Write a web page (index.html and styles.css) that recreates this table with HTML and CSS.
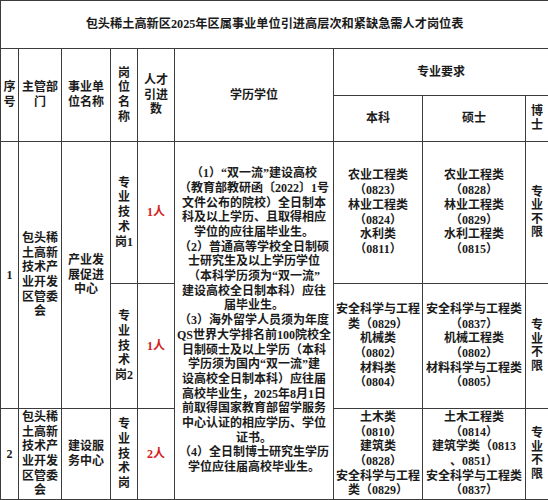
FILE: index.html
```html
<!DOCTYPE html>
<html lang="zh-CN">
<head>
<meta charset="utf-8">
<title>岗位表</title>
<link rel="stylesheet" href="styles.css">
</head>
<body>
<table class="sheet">
  <colgroup>
    <col class="c-no"><col class="c-dept"><col class="c-unit"><col class="c-post"><col class="c-num"><col class="c-edu"><col class="c-bk"><col class="c-ss"><col class="c-bs">
  </colgroup>
  <tr class="r-title">
    <td colspan="9" class="title">包头稀土高新区2025年区属事业单位引进高层次和紧缺急需人才岗位表</td>
  </tr>
  <tr class="r-ha">
    <td rowspan="2">序<br>号</td>
    <td rowspan="2">主管部<br>门</td>
    <td rowspan="2">事业单<br>位名称</td>
    <td rowspan="2">岗<br>位<br>名<br>称</td>
    <td rowspan="2">人才<br>引进<br>数</td>
    <td rowspan="2">学历学位</td>
    <td colspan="3">专业要求</td>
  </tr>
  <tr class="r-hb">
    <td>本科</td>
    <td>硕士</td>
    <td class="narrow">博<br>士</td>
  </tr>
  <tr class="r-1a">
    <td rowspan="2">1</td>
    <td rowspan="2">包头稀<br>土高新<br>技术产<br>业开发<br>区管委<br>会</td>
    <td rowspan="2">产业发<br>展促进<br>中心</td>
    <td>专<br>业<br>技<br>术<br>岗1</td>
    <td class="red">1人</td>
    <td rowspan="3" class="edu">（1）“双一流”建设高校<br>（教育部教研函〔2022〕1号<br>文件公布的院校）全日制本<br>科及以上学历、且取得相应<br>学位的应往届毕业生。<br>（2）普通高等学校全日制硕<br>士研究生及以上学历学位<br>（本科学历须为“双一流”<br>建设高校全日制本科）应往<br>届毕业生。<br>（3）海外留学人员须为年度<br>QS世界大学排名前100院校全<br>日制硕士及以上学历（本科<br>学历须为国内“双一流”建<br>设高校全日制本科）应往届<br>高校毕业生，2025年8月1日<br>前取得国家教育部留学服务<br>中心认证的相应学历、学位<br>证书。<br>（4）全日制博士研究生学历<br>学位应往届高校毕业生。</td>
    <td>农业工程类<br>（0823）<br>林业工程类<br>（0824）<br>水利类<br>（0811）</td>
    <td>农业工程类<br>（0828）<br>林业工程类<br>（0829）<br>水利工程类<br>（0815）</td>
    <td class="narrow">专<br>业<br>不<br>限</td>
  </tr>
  <tr class="r-1b">
    <td>专<br>业<br>技<br>术<br>岗2</td>
    <td class="red">1人</td>
    <td>安全科学与工程<br>类（0829）<br>机械类<br>（0802）<br>材料类<br>（0804）</td>
    <td>安全科学与工程类<br>（0837）<br>机械工程类<br>（0802）<br>材料科学与工程类<br>（0805）</td>
    <td class="narrow">专<br>业<br>不<br>限</td>
  </tr>
  <tr class="r-2">
    <td>2</td>
    <td>包头稀<br>土高新<br>技术产<br>业开发<br>区管委<br>会</td>
    <td>建设服<br>务中心</td>
    <td>专<br>业<br>技<br>术<br>岗</td>
    <td class="red">2人</td>
    <td>土木类<br>（0810）<br>建筑类<br>（0828）<br>安全科学与工程<br>类（0829）</td>
    <td>土木工程类<br>（0814）<br>建筑学类（0813<br>、0851）<br>安全科学与工程类<br>（0837）</td>
    <td class="narrow">专<br>业<br>不<br>限</td>
  </tr>
</table>
</body>
</html>
```
FILE: styles.css
```css
html, body {
  margin: 0;
  padding: 0;
  background: #ffffff;
}

.sheet {
  border-collapse: collapse;
  table-layout: fixed;
  width: 548px;
  font-family: "Liberation Serif", "Noto Sans CJK SC", serif;
  font-weight: 700;
  font-size: 12px;
  line-height: 14.7px;
  color: #1b1b1b;
}

.sheet td {
  border: 1px solid #3c3c3c;
  padding: 0;
  text-align: center;
  vertical-align: middle;
  white-space: nowrap;
  overflow: hidden;
}

.c-no { width: 18px; }
.c-dept { width: 43px; }
.c-unit { width: 49px; }
.c-post { width: 27px; }
.c-num { width: 37px; }
.c-edu { width: 159px; }
.c-bk { width: 89px; }
.c-ss { width: 103px; }
.c-bs { width: 23px; }

.r-title { height: 48px; }
.r-ha { height: 47px; }
.r-hb { height: 46px; }
.r-1a { height: 142px; }
.r-1b { height: 125px; }
.r-2 { height: 91px; }

.title {
  font-size: 12.2px;
}

.narrow {
  line-height: 13.5px;
}

.red {
  color: #d21e1e;
}
```
